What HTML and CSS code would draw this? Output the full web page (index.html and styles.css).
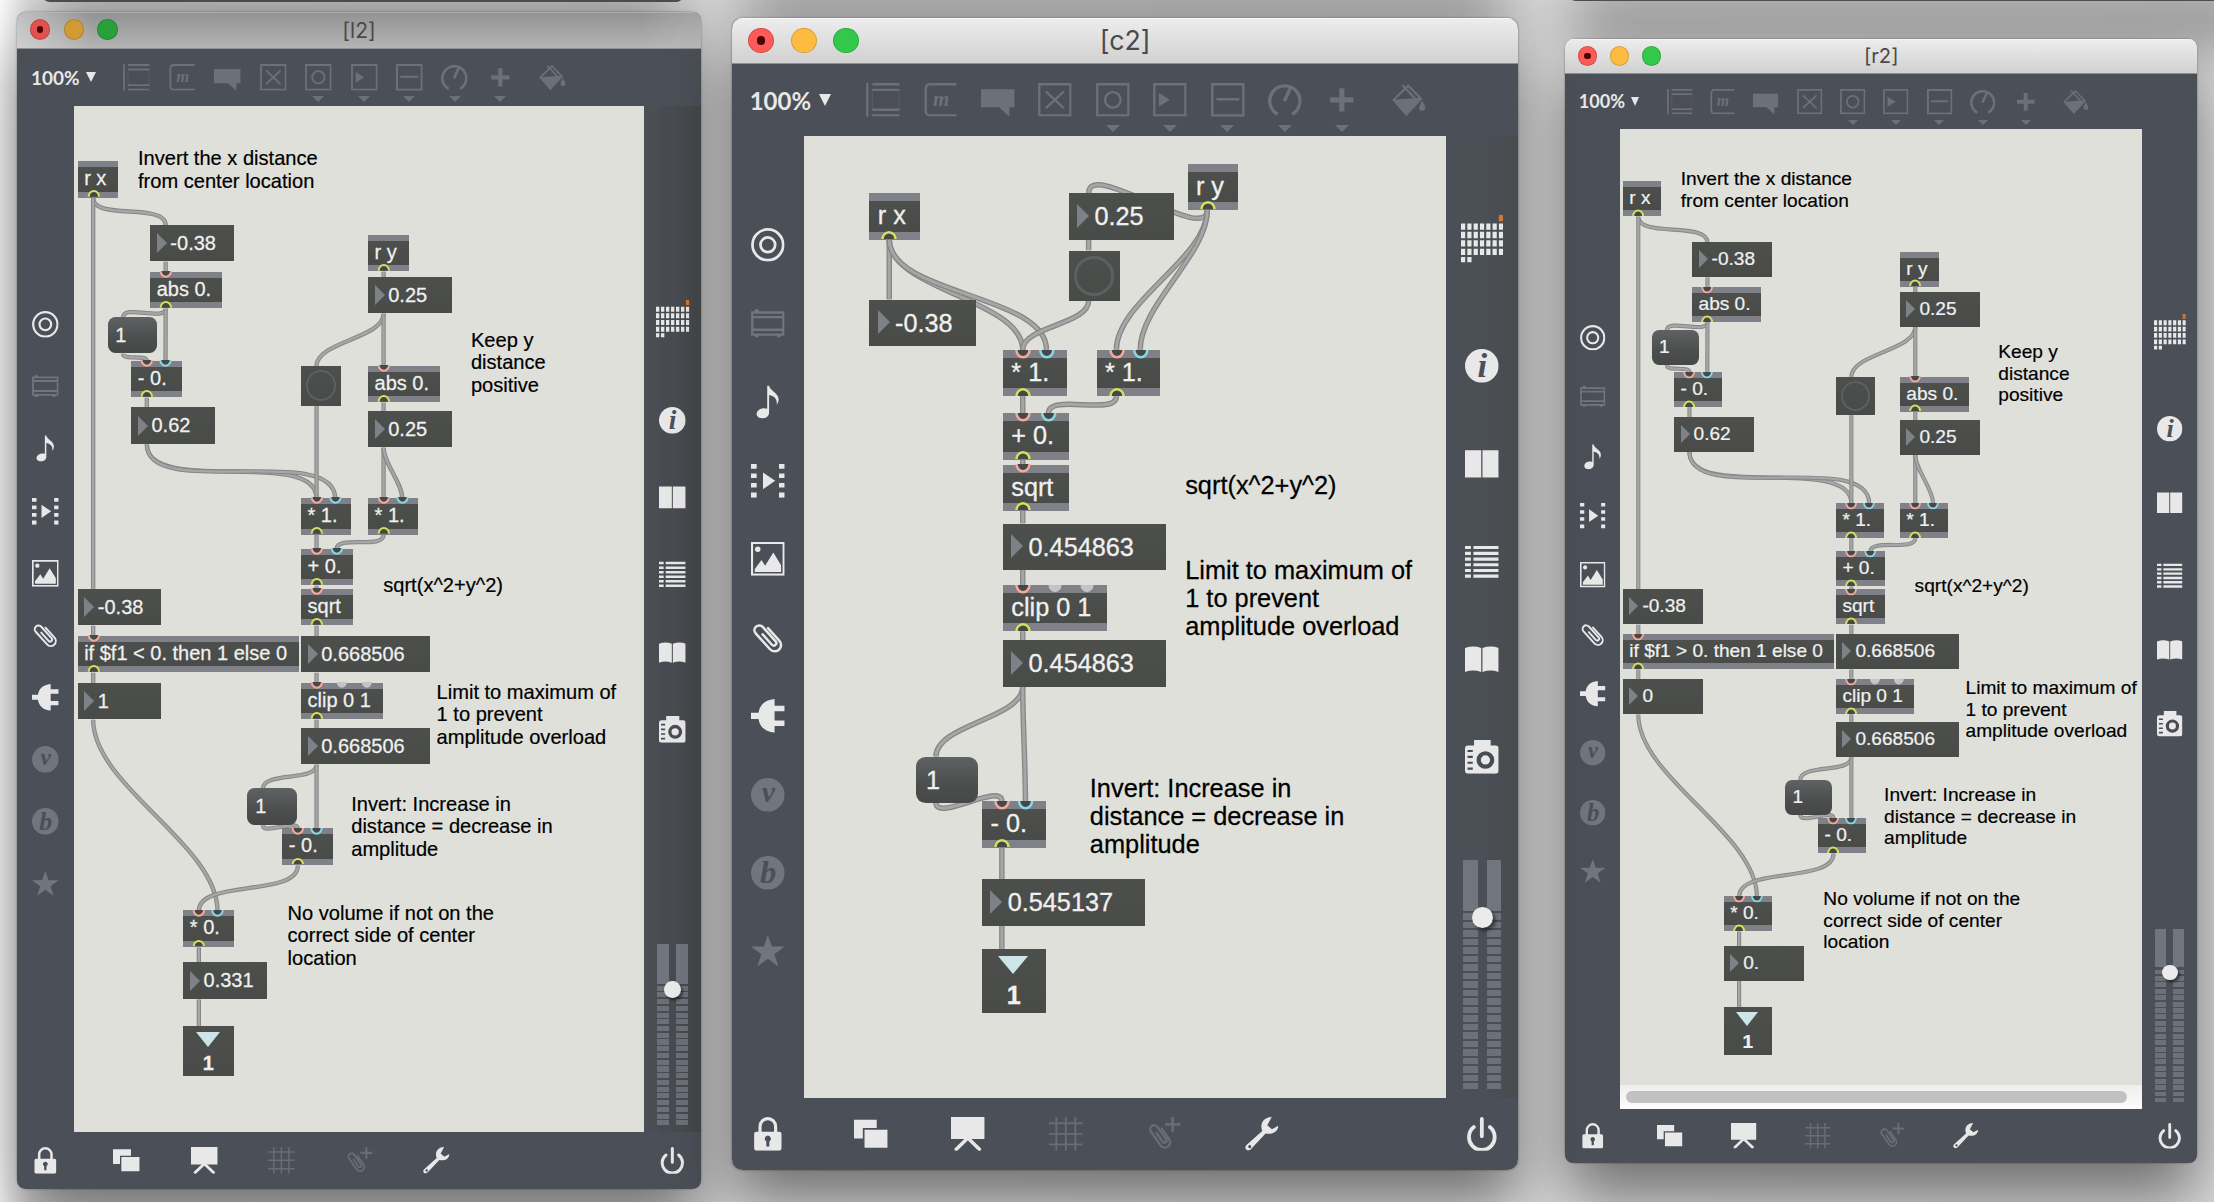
FILE: index.html
```html
<!DOCTYPE html>
<html lang="en">
<head>
<meta charset="utf-8">
<title>Patchers</title>
<link rel="stylesheet" href="styles.css">
</head>
<body>
<svg class="sprite" aria-hidden="true">
  <symbol id="object" viewBox="0 0 16 16"><path d="M.6 0v16M3 .6h13M3 3.3h13M3 12.7h13M3 15.4h13" fill="none" stroke="currentColor" stroke-width="1.1"/><path d="M3 3v10M15.7 3v10" stroke="currentColor" stroke-width=".4" opacity=".6"/></symbol>
  <symbol id="message" viewBox="0 0 16 16"><path d="M15.4.6H3Q.8.600.8 3v10q0 2.400 2.200 2.400h12.400" fill="none" stroke="currentColor" stroke-width="1.1"/></symbol>
  <symbol id="comment" viewBox="0 0 16 16"><path d="M0 3h16v8.500h-2.500V16L8.500 11.500H0z" fill="currentColor"/></symbol>
  <symbol id="toggle" viewBox="0 0 16 16"><path d="M.6.6h14.800v14.800H.6zM3.700 4l8.600 8M12.300 4l-8.600 8" fill="none" stroke="currentColor" stroke-width="1.100"/></symbol>
  <symbol id="button" viewBox="0 0 16 16"><path d="M.6.6h14.800v14.800H.6z" fill="none" stroke="currentColor" stroke-width="1.100"/><circle cx="8" cy="8" r="3.700" fill="none" stroke="currentColor" stroke-width="1.100"/></symbol>
  <symbol id="number" viewBox="0 0 16 16"><path d="M.6.6h14.800v14.800H.6z" fill="none" stroke="currentColor" stroke-width="1.100"/><path d="M2.800 4.800L8 8l-5.200 3.200z" fill="currentColor"/></symbol>
  <symbol id="slider" viewBox="0 0 16 16"><path d="M.6.6h14.800v14.800H.6zM2.600 7.700h10.800" fill="none" stroke="currentColor" stroke-width="1.200"/></symbol>
  <symbol id="dial" viewBox="0 0 16 16"><path d="M4.600 14.900A7.200 7.200 0 1 1 11.400 14.900M7.800 8.600L10.600 2.500" fill="none" stroke="currentColor" stroke-width="1.600"/></symbol>
  <symbol id="plus" viewBox="0 0 16 16"><path d="M8 2.500v11M2.500 8h11" stroke="currentColor" stroke-width="2.500"/></symbol>
  <symbol id="bucket" viewBox="0 0 16 16"><path d="M5 1l6 6.500M8 1L.8 8l6 7 7-7.500-6-6.200" fill="none" stroke="currentColor" stroke-width="1"/><path d="M.5 8l13-1-6.700 8.300z" fill="currentColor"/><path d="M14.300 8.500q3.200 4.500 0 4.700-2.800-.2 0-4.700" fill="currentColor"/></symbol>

  <symbol id="target" viewBox="0 0 16 16"><g fill="none" stroke="currentColor" stroke-width="1.300"><circle cx="8" cy="8" r="7.300"/><circle cx="8" cy="8" r="3.500"/></g></symbol>
  <symbol id="rack" viewBox="0 0 16 16"><path d="M.6 2.600h14.800v10.500H.6zM1 4.800h14M1 10.800h14" fill="none" stroke="currentColor" stroke-width="1.100"/><path d="M1.500 2.500q0-1.500 1.200-1.500t1.200 1.500zM1.500 13q0 1.500 1.200 1.500T3.900 13zM12 13q0 1.500 1.200 1.500t1.200-1.500z" fill="currentColor"/></symbol>
  <symbol id="note" viewBox="0 0 16 16"><path d="M7.700.3h.9c.3 2.500 4.900 3.300 4.500 7-.1 1.200-.7 2-.9 2.200.4-2.700-1-4.200-3.600-4.700v8.100c0 4-6.300 3.600-5.900.6.3-1.900 2.800-3 5-2.200z" fill="currentColor"/></symbol>
  <symbol id="video" viewBox="0 0 16 16"><path d="M0 0h2.700v2.200H0zM0 4.500h2.700v2.200H0zM0 9h2.700v2.200H0zM0 13.500h2.700v2.500H0zM13.300 0H16v2.200h-2.700zM13.300 4.500H16v2.200h-2.700zM13.300 9H16v2.200h-2.700zM13.300 13.500H16V16h-2.700zM5.700 4l5.800 4-5.800 4z" fill="currentColor"/></symbol>
  <symbol id="image" viewBox="0 0 16 16"><path d="M.5.5h15v15H.5z" fill="none" stroke="currentColor"/><circle cx="3.200" cy="3.400" r="1.300" fill="currentColor"/><path d="M1.800 14.300v-1.500L5 8.500l1.700 2.800L10.600 5l3.700 6v3.300z" fill="currentColor"/></symbol>
  <symbol id="clip" viewBox="0 0 16 16"><path d="M3 -3.500V4.600A3 3 0 0 1 -3 4.600V-5.600A2.250 2.250 0 0 1 1.500 -5.600V3.600A1.200 1.200 0 0 1 -.9 3.600V-3" transform="translate(8.200 8) rotate(-42)" fill="none" stroke="currentColor" stroke-width="1.200" stroke-linecap="round"/></symbol>
  <symbol id="plug" viewBox="0 0 16 16"><path d="M11.200 0v3.200H16v2.600h-4.800v4.400H16v2.600h-4.800V16C6.500 15.600 4 13 3.600 9.500H0v-3h3.600C4 3 6.500.4 11.200 0z" fill="currentColor"/></symbol>
  <symbol id="disc" viewBox="0 0 16 16"><circle cx="8" cy="8" r="8" fill="currentColor"/></symbol>
  <symbol id="star" viewBox="0 0 16 16"><path d="M8 0l1.900 5.500H16l-4.900 3.600L13 15l-5-3.700L3 15l1.900-5.900L0 5.500h6.100z" fill="currentColor"/></symbol>

  <symbol id="grid-pad" viewBox="0 0 20 24"><path d="M18 0h2v3h-2z" fill="#d9762b"/><path d="M0 5.500h20M0 9.500h20M0 13.500h20M0 17.500h20" stroke="currentColor" stroke-width="3" stroke-dasharray="2 1"/><path d="M0 21.200h5" stroke="currentColor" stroke-width="2.400" stroke-dasharray="2 1"/></symbol>
  <symbol id="columns" viewBox="0 0 16 16"><path d="M0 1.500h7.700v13H0zM8.300 1.500H16v13H8.300z" fill="currentColor"/></symbol>
  <symbol id="list" viewBox="0 0 16 16"><path d="M0 1.200h2.800M0 4h2.800M0 6.700h2.800M0 9.400h2.800M0 12.100h2.800M0 14.800h2.800M4 1.200h12M4 4h12M4 6.700h12M4 9.400h12M4 12.100h12M4 14.800h12" stroke="currentColor" stroke-width="1.500"/></symbol>
  <symbol id="book" viewBox="0 0 16 16"><path d="M0 2.800q4-1.400 7.700 0v11.400q-4-1.300-7.700 0zM8.300 2.800q4-1.400 7.700 0v11.400q-4-1.300-7.700 0z" fill="currentColor"/></symbol>
  <symbol id="camera" viewBox="0 0 16 16"><path d="M4.300 0h7.900v2.600h2.300Q16 2.600 16 4v10.500q0 1.500-1.500 1.500h-13Q0 16 0 14.500V4q0-1.400 1.500-1.400h2.800z" fill="currentColor"/><circle cx="9.700" cy="9.500" r="3.200" fill="none" stroke="#494d52" stroke-width="2"/><path d="M1.200 5.200h2.500M1.200 8h2.500M1.200 10.800h2.500M1.200 13.600h2.500" stroke="#494d52" stroke-width="1"/></symbol>

  <symbol id="lock" viewBox="0 0 16 16"><path d="M4.300 7.500V4.500a3.700 3.700 0 0 1 7.400 0v3" fill="none" stroke="currentColor" stroke-width="1.500"/><path fill-rule="evenodd" d="M2.500 7h11q1 0 1 1v7q0 1-1 1h-11q-1 0-1-1V8q0-1 1-1zM8 8.800a1.500 1.500 0 0 0-.7 2.800v2.400h1.400v-2.400A1.500 1.500 0 0 0 8 8.800z" fill="currentColor"/></symbol>
  <symbol id="windows" viewBox="0 0 16 16"><path d="M0 1.300h10.800v3.900H4.200v5H0zM5 6h11v8.600H5z" fill="currentColor"/></symbol>
  <symbol id="board" viewBox="0 0 16 16"><path d="M0 0h16v10.500H0z" fill="currentColor"/><path d="M8 10l-5.500 5.300M8 10l5.500 5.300" stroke="currentColor" stroke-width="1.700" stroke-linecap="round"/></symbol>
  <symbol id="grid" viewBox="0 0 16 16"><path d="M3.500 0v16M8 0v16M12.500 0v16M0 3h16M0 8h16M0 13h16" stroke="currentColor" stroke-width=".9"/></symbol>
  <symbol id="clip-plus" viewBox="0 0 16 16"><path d="M2.500 -2.500V3.800A2.500 2.500 0 0 1 -2.500 3.800V-4.200A1.900 1.900 0 0 1 1.300 -4.200V3A1 1 0 0 1 -.7 3V-2" transform="translate(6.300 8.900) rotate(-35)" fill="none" stroke="currentColor" stroke-width="1.100" stroke-linecap="round"/><path d="M12.200 0v7M8.600 3.500H16" stroke="currentColor" stroke-width="1.300"/></symbol>
  <symbol id="wrench" viewBox="0 0 16 16"><path fill-rule="evenodd" d="M12.700 0C9 .1 6.800 3 8.200 6.600L.7 13.300c-1.600 1.700.7 3.600 2.200 1.900l6.900-7.400c3 .8 6-.7 6-3.600l-3 1.600-2.200-1.900zM2 13.400a.7.700 0 1 1-.1 1.300.7.700 0 0 1 .1-1.300z" fill="currentColor"/></symbol>
  <symbol id="power" viewBox="0 0 16 16"><path d="M4.200 4.800a6.100 6.100 0 1 0 7.600 0M8 .9v8.200" fill="none" stroke="currentColor" stroke-width="1.800" stroke-linecap="round"/></symbol>
</svg>

<main class="desktop">
  <div class="behind behind-left"></div>
  <div class="behind behind-center"></div>
  <div class="behind behind-right"></div>
  <section class="window window-left" data-patch="side" data-title="[l2]" data-test="&lt;" data-gate="1" data-level="0.331"></section>
  <section class="window window-right" data-patch="side" data-title="[r2]" data-test="&gt;" data-gate="0" data-level="0." data-scroll="true"></section>
  <section class="window window-center" data-patch="center" data-title="[c2]"></section>
</main>
<script src="patches.js"></script>
</body>
</html>
```
FILE: styles.css
```css
* { box-sizing: border-box; }
body { margin: 0; background: #e4e4e4; font-family: "Liberation Sans", Arial, sans-serif; }
.sprite { position: absolute; width: 0; height: 0; }
.desktop { position: relative; width: 2214px; height: 1202px; overflow: hidden; background: linear-gradient(90deg, #fff 0, #e6e6e6 30px, #dedede 100%); }

/* windows */
.window { position: absolute; border-radius: 10px; box-shadow: 0 0 2px rgba(0,0,0,.45), 0 36px 64px rgba(0,0,0,.5); }
.window-left { left: 17px; top: 11.500px; }
.window-center { left: 732px; top: 17.500px; box-shadow: 0 0 2px rgba(0,0,0,.5), 0 34px 60px rgba(0,0,0,.5); }
.window-right { left: 1565.300px; top: 39px; }
.frame { display: flex; flex-direction: column; border-radius: 5px; overflow: hidden; background: #4b4f57; color: #e8e8e8; }
.window-left .frame { zoom: 1.667; width: 410.4px; height: 706.600px; }
.window-center .frame { zoom: 2.105; width: 373.6px; height: 547.500px; }
.window-right .frame { zoom: 1.59; width: 397.4px; height: 707.100px; }

.behind { position: absolute; height: 40px; background: #4b4f55; border-radius: 8px; box-shadow: 0 36px 60px rgba(0,0,0,.5); }
.behind-left { left: 42px; top: -38px; width: 642px; }
.behind-center { left: 740px; top: -48px; width: 770px; }
.behind-right { left: 1568px; top: -39px; width: 700px; }

/* title bar */
.titlebar { display: flex; align-items: center; height: 22.2px; flex: none; padding: 0 7.800px; background: linear-gradient(#ededed, #d1d1d1); border-bottom: .6px solid #8f8f8f; box-shadow: inset 0 .5px #f8f8f8; }
.window-left .titlebar { background: linear-gradient(90deg, rgba(225,225,225,.6), transparent 45px, transparent 375px, rgba(200,200,200,.35)), linear-gradient(#929292, #b4b4b4); box-shadow: inset 0 .5px #b8b8b8; }
.lights { display: flex; gap: 8px; width: 60px; }
.light { width: 12.2px; height: 12.2px; border-radius: 50%; border: .4px solid rgba(0,0,0,.15); display: flex; align-items: center; justify-content: center; }
.close { background: #fc5b57; }
.close::after { content: ""; width: 4px; height: 4px; border-radius: 50%; background: #4a0303; }
.minimise { background: #fdbc40; }
.maximise { background: #34c84a; }
.window-left .close { background: #e1514e; }
.window-left .minimise { background: #d19a34; }
.window-left .maximise { background: #2aa03b; }
.title { flex: 1; text-align: center; padding-right: 60px; font: 12.700px/22px Inter, Roboto, sans-serif; color: #4a4a4a; }
.window-left .title { padding-top: .6px; }

/* toolbar */
.toolbar { display: flex; flex: none; height: 34.2px; }
.zoom-level { display: flex; align-items: center; gap: 6px; width: 58.200px; padding-left: 8.400px; font: bold 11.400px Lato, sans-serif; }
.zoom-level span { width: 27px; white-space: nowrap; }
.zoom-level::after { content: ""; border: 3px solid transparent; border-top: 6px solid; border-bottom: 0; }
.tools { display: flex; color: #6c7079; }
.tool { display: flex; flex-direction: column; align-items: center; width: 27.250px; padding-top: 9px; }
.tool:last-child { margin-left: 4.300px; }
.tool.has-menu::after { content: ""; margin-top: 3.700px; border: 3.600px solid transparent; border-top: 3.700px solid; border-bottom: 0; }
.icon { display: block; width: 16px; height: 16px; flex: none; overflow: visible; }
.glyph { font-family: "Liberation Serif", serif; font-style: italic; font-weight: bold; text-anchor: middle; fill: #4b4f57; }
.glyph-m { fill: currentColor; }

/* body */
.middle { display: grid; grid-template-columns: 34.300px 1fr 34.500px; flex: 1; min-height: 0; }
.rail-left { display: flex; flex-direction: column; align-items: center; justify-content: center; gap: 21.300px; padding-bottom: 17.500px; }
.dim { color: #71757d; }
.rail-right { display: flex; flex-direction: column; align-items: center; justify-content: space-between; padding-bottom: 4px; }
.window-left .rail-right { background: linear-gradient(90deg, #4b4f56, #45484a); }
.window-center .rail-right { background: linear-gradient(90deg, #4b4f56 55%, #484c4e); }
.palette { display: flex; flex-direction: column; align-items: center; gap: 30.400px; }
.palette .icon:first-child { width: 20px; height: 24px; margin-bottom: 9.500px; }
.window-left .palette { margin-top: 116.800px; }
.window-right .palette { margin-top: 116.800px; }
.window-center .palette { margin-top: 37.300px; }
.meter { position: relative; display: flex; gap: 4.200px; height: 108.800px; }
.meter-bar { width: 7px; background: linear-gradient(#71757d 24.100px, transparent 24.100px), repeating-linear-gradient(transparent 0, transparent .95px, #6c7079 .95px, #6c7079 4.040px) 0 24.100px / 100% 84.800px no-repeat; }
.knob { position: absolute; left: 4.100px; top: 22.200px; width: 10px; height: 10px; border-radius: 50%; background: #ebebeb; box-shadow: 1.300px 1.500px 1.500px rgba(0,0,0,.45); }
.actions { display: flex; align-items: center; height: 34.400px; flex: none; gap: 30.500px; padding: 0 9.400px 0 9px; }
.actions .icon:first-child { margin-right: 2.300px; }
.actions .icon:last-child { margin-left: auto; }
.actions .dim { color: #686c74; }

/* patch canvas: objects sit at free positions */
.canvas { position: relative; overflow: hidden; background: #dfe0da; }
.cords { position: absolute; inset: 0; width: 100%; height: 100%; fill: none; }
.cord { stroke: #868686; stroke-width: 2.600; }
.cord-core { stroke: #a6a6a6; stroke-width: 1.400; }
.node { position: absolute; left: calc(var(--x) * 1px); top: calc(var(--y) * 1px); width: calc(var(--w) * 1px); height: 22px; background: linear-gradient(#4c4f4c, #484b48); color: #f0f0f0; font-size: 12px; line-height: 22px; white-space: pre; padding-left: 4px; -webkit-text-stroke: .15px #f0f0f0; }
.object { border: solid #808188; border-width: 4px 0; line-height: 14px; }
.value { padding-left: 12.200px; }
.value::before { content: ""; position: absolute; left: 4px; top: 5px; border: 6px solid transparent; border-left-color: #808188; border-right-width: 0; }
.message { border-radius: 4.500px; padding-left: 4.700px; background: linear-gradient(#5f6263, #4b4e4d 60%, #454846); }
.bang { height: 24px; display: flex; align-items: center; justify-content: center; padding: 0; }
.bang::before { content: ""; width: 16px; height: 16px; border: 1.500px solid #5d6062; border-radius: 50%; }
.outlet { height: 30px; padding: 14px 0 0; text-align: center; font-weight: bold; line-height: 16px; }
.outlet::before { content: ""; position: absolute; left: 7.700px; top: 3.200px; border: 7.300px solid transparent; border-top: 9px solid #cde5e8; border-bottom: 0; }
.ports { position: absolute; left: 0; top: -4px; width: 100%; height: 22px; fill: #454846; stroke-width: 1.200; }
.inlet { stroke: #f5a89c; }
.inlet.cold { stroke: #86d8e6; }
.inlet.idle { stroke: none; fill: #c3c4c6; }
.out { stroke: #d6e05c; }
.note { position: absolute; left: calc(var(--x) * 1px); top: calc(var(--y) * 1px - 11px); margin: 0; font-size: 12.050px; line-height: 13.500px; white-space: pre; color: #000; -webkit-text-stroke: .12px #000; }
.scrollbar { position: absolute; left: 0; right: 0; bottom: 0; height: 14.700px; padding: 3.600px 9.500px 3.300px 4px; background: linear-gradient(#efefef, #fcfcfc); }
.scrollbar::before { content: ""; display: block; height: 7.800px; border-radius: 4px; background: #c1c1c1; }
```
FILE: patches.js
```js
// Each node: [id, kind, x, y, width, text, inlets]
const patches = {
  side: (d) => ({
    nodes: [
      ['rx', 'object', 2, 33.2, 24.2, 'r x', 0],
      ['x1', 'value', 45.5, 71.4, 50.2, '-0.38'],
      ['absx', 'object', 45.5, 99.6, 43, 'abs 0.', 1],
      ['m1', 'message', 20, 126.6, 29.6, '1'],
      ['inv', 'object', 34.2, 153, 30.2, '- 0.', 2],
      ['x2', 'value', 34.2, 181.1, 50.2, '0.62'],
      ['ry', 'object', 176.2, 77.4, 24.4, 'r y', 0],
      ['y1', 'value', 176.2, 102.6, 50.2, '0.25'],
      ['b', 'bang', 136, 156, 24.2, ''],
      ['absy', 'object', 176.2, 156, 43.3, 'abs 0.', 1],
      ['y2', 'value', 176.2, 183, 50.2, '0.25'],
      ['mx', 'object', 136, 235.4, 30.2, '* 1.', 2],
      ['my', 'object', 176.2, 235.4, 30.2, '* 1.', 2],
      ['sum', 'object', 136, 265.8, 31, '+ 0.', 2],
      ['sqrt', 'object', 136, 289.8, 31, 'sqrt', 1],
      ['r1', 'value', 136, 318, 77.4, '0.668506'],
      ['clip', 'object', 136, 346.2, 49, 'clip 0 1', 3],
      ['r2', 'value', 136, 373.2, 77.4, '0.668506'],
      ['x3', 'value', 2, 289.8, 50.2, '-0.38'],
      ['if', 'object', 2, 318, 132.6, `if $f1 ${d.test} 0. then 1 else 0`, 1],
      ['gate', 'value', 2, 346.2, 50.2, d.gate],
      ['m2', 'message', 103.9, 409.4, 29.6, '1'],
      ['dec', 'object', 124.8, 433.6, 30.2, '- 0.', 2],
      ['mul', 'object', 65.4, 482.8, 30.2, '* 0.', 2],
      ['lvl', 'value', 65.4, 514, 50.2, d.level],
      ['out', 'outlet', 65.4, 552.4, 30.2, '1'],
    ],
    cords: 'rx>x1 rx>x3 x1>absx absx>m1 absx>inv:1 m1>inv inv>x2 x2>mx x2>mx:1 ry>y1 y1>b y1>absy absy>y2 b>mx y2>my y2>my:1 mx>sum my>sum:1 sum>sqrt sqrt>r1 r1>clip clip>r2 r2>m2 r2>dec:1 m2>dec x3>if if>gate gate>mul:1 dec>mul mul>lvl lvl>out',
    notes: [
      [38.3, 36, 'Invert the x distance\nfrom center location'],
      [238, 144.8, 'Keep y\ndistance\npositive'],
      [185.4, 292, 'sqrt(x^2+y^2)'],
      [217.4, 356, 'Limit to maximum of\n1 to prevent\namplitude overload'],
      [166.2, 423.4, 'Invert: Increase in\ndistance = decrease in\namplitude'],
      [128, 488.6, 'No volume if not on the\ncorrect side of center\nlocation'],
    ],
  }),
  center: () => ({
    nodes: [
      ['rx', 'object', 31, 27.2, 24.2, 'r x', 0],
      ['x1', 'value', 31, 77.6, 50.4, '-0.38'],
      ['y1', 'value', 125.7, 27.2, 50.2, '0.25'],
      ['ry', 'object', 182.1, 13.1, 24.2, 'r y', 0],
      ['b', 'bang', 125.7, 54.3, 24.2, ''],
      ['mx', 'object', 94.4, 101.6, 30.3, '* 1.', 2],
      ['my', 'object', 138.9, 101.6, 30.3, '* 1.', 2],
      ['sum', 'object', 94.4, 131.7, 31.2, '+ 0.', 2],
      ['sqrt', 'object', 94.4, 156, 31.2, 'sqrt', 1],
      ['r1', 'value', 94.4, 184, 77.6, '0.454863'],
      ['clip', 'object', 94.4, 213.3, 49.4, 'clip 0 1', 3],
      ['r2', 'value', 94.4, 239.5, 77.6, '0.454863'],
      ['m', 'message', 53.2, 294.8, 29.6, '1'],
      ['dec', 'object', 84.5, 316, 30.2, '- 0.', 2],
      ['lvl', 'value', 84.5, 353.1, 77.6, '0.545137'],
      ['out', 'outlet', 84.5, 386.3, 30.2, '1'],
    ],
    cords: 'rx>x1 rx>mx rx>mx:1 ry>y1 ry>my ry>my:1 y1>b b>mx mx>sum my>sum:1 sum>sqrt sqrt>r1 r1>clip clip>r2 r2>m r2>dec:1 m>dec dec>lvl lvl>out',
    notes: [
      [181, 169.9, 'sqrt(x^2+y^2)'],
      [181, 210.2, 'Limit to maximum of\n1 to prevent\namplitude overload'],
      [135.7, 313.8, 'Invert: Increase in\ndistance = decrease in\namplitude'],
    ],
  }),
};

const heights = { bang: 24, outlet: 30 };
// Icons that carry an italic letter: [backing symbol, letter, baseline, size]
const glyphs = {
  message: ['message', 'm', 11, 10],
  vee: ['disc', 'v', 11.6, 14],
  bee: ['disc', 'b', 13, 15.5],
  info: ['disc', 'i', 13.2, 16.5],
};
const icon = (name, cls = '') => {
  const g = glyphs[name];
  if (!g) return `<svg class="icon ${cls}"><use href="#${name}"/></svg>`;
  return `<svg class="icon ${cls}" viewBox="0 0 16 16"><use href="#${g[0]}"/><text class="glyph glyph-${g[1]}" x="8.2" y="${g[2]}" font-size="${g[3]}">${g[1]}</text></svg>`;
};
const esc = (s) => s.replace(/&/g, '&amp;').replace(/</g, '&lt;').replace(/>/g, '&gt;');
const inletX = (w, n, i) => (i === 0 ? 9.5 : 9.5 + (i * (w - 19)) / (n - 1));

function nodeHtml([, kind, x, y, w, text, inlets]) {
  let ports = '';
  if (kind === 'object') {
    for (let i = 0; i < inlets; i++) {
      const cls = inlets === 3 && i ? 'idle' : i ? 'cold' : '';
      ports += `<path class="inlet ${cls}" d="M${inletX(w, inlets, i) - 3.1} 0a3.1 3.4 0 0 0 6.2 0"/>`;
    }
    ports = `<svg class="ports">${ports}<path class="out" d="M6.4 22a3.1 3.4 0 0 1 6.2 0"/></svg>`;
  }
  return `<div class="node ${kind}" style="--x:${x};--y:${y};--w:${w}">${esc(text)}${ports}</div>`;
}

function cordHtml(spec, nodes) {
  const [from, target] = spec.split('>');
  const [to, inlet = 0] = target.split(':');
  const a = nodes.find((n) => n[0] === from);
  const b = nodes.find((n) => n[0] === to);
  const x1 = a[2] + 9.5, y1 = a[3] + (heights[a[1]] || 22);
  const x2 = b[2] + inletX(b[4], b[6], +inlet), y2 = b[3];
  const k = Math.hypot(x2 - x1, y2 - y1) * 0.29;
  const d = `M${x1} ${y1}C${x1} ${y1 + k} ${x2} ${y2 - k} ${x2} ${y2}`;
  return `<path class="cord" d="${d}"/><path class="cord-core" d="${d}"/>`;
}

const tools = ['object', 'message', 'comment', 'toggle', 'button', 'number', 'slider', 'dial', 'plus', 'bucket'];
const withMenu = ['button', 'number', 'slider', 'dial', 'plus'];

document.querySelectorAll('.window').forEach((win) => {
  const p = patches[win.dataset.patch](win.dataset);
  win.innerHTML = `<div class="frame">
    <header class="titlebar">
      <div class="lights"><i class="light close"></i><i class="light minimise"></i><i class="light maximise"></i></div>
      <div class="title">${win.dataset.title}</div>
    </header>
    <div class="toolbar">
      <div class="zoom-level"><span>100%</span></div>
      <div class="tools">${tools.map((t) => `<div class="tool ${withMenu.includes(t) ? 'has-menu' : ''}">${icon(t)}</div>`).join('')}</div>
    </div>
    <div class="middle">
      <nav class="rail-left">${icon('target')}${icon('rack', 'dim')}${['note', 'video', 'image', 'clip', 'plug'].map((n) => icon(n)).join('')}${['vee', 'bee', 'star'].map((n) => icon(n, 'dim')).join('')}</nav>
      <div class="canvas">
        <svg class="cords">${p.cords.split(' ').map((c) => cordHtml(c, p.nodes)).join('')}</svg>
        ${p.nodes.map(nodeHtml).join('')}
        ${p.notes.map(([x, y, t]) => `<p class="note" style="--x:${x};--y:${y}">${t}</p>`).join('')}
        ${win.dataset.scroll ? '<div class="scrollbar"></div>' : ''}
      </div>
      <aside class="rail-right">
        <div class="palette">${['grid-pad', 'info', 'columns', 'list', 'book', 'camera'].map((n) => icon(n)).join('')}</div>
        <div class="meter"><div class="meter-bar"></div><div class="meter-bar"></div><div class="knob"></div></div>
      </aside>
    </div>
    <footer class="actions">${icon('lock')}${icon('windows')}${icon('board')}${icon('grid', 'dim')}${icon('clip-plus', 'dim')}${icon('wrench')}${icon('power')}</footer>
  </div>`;
});
```
